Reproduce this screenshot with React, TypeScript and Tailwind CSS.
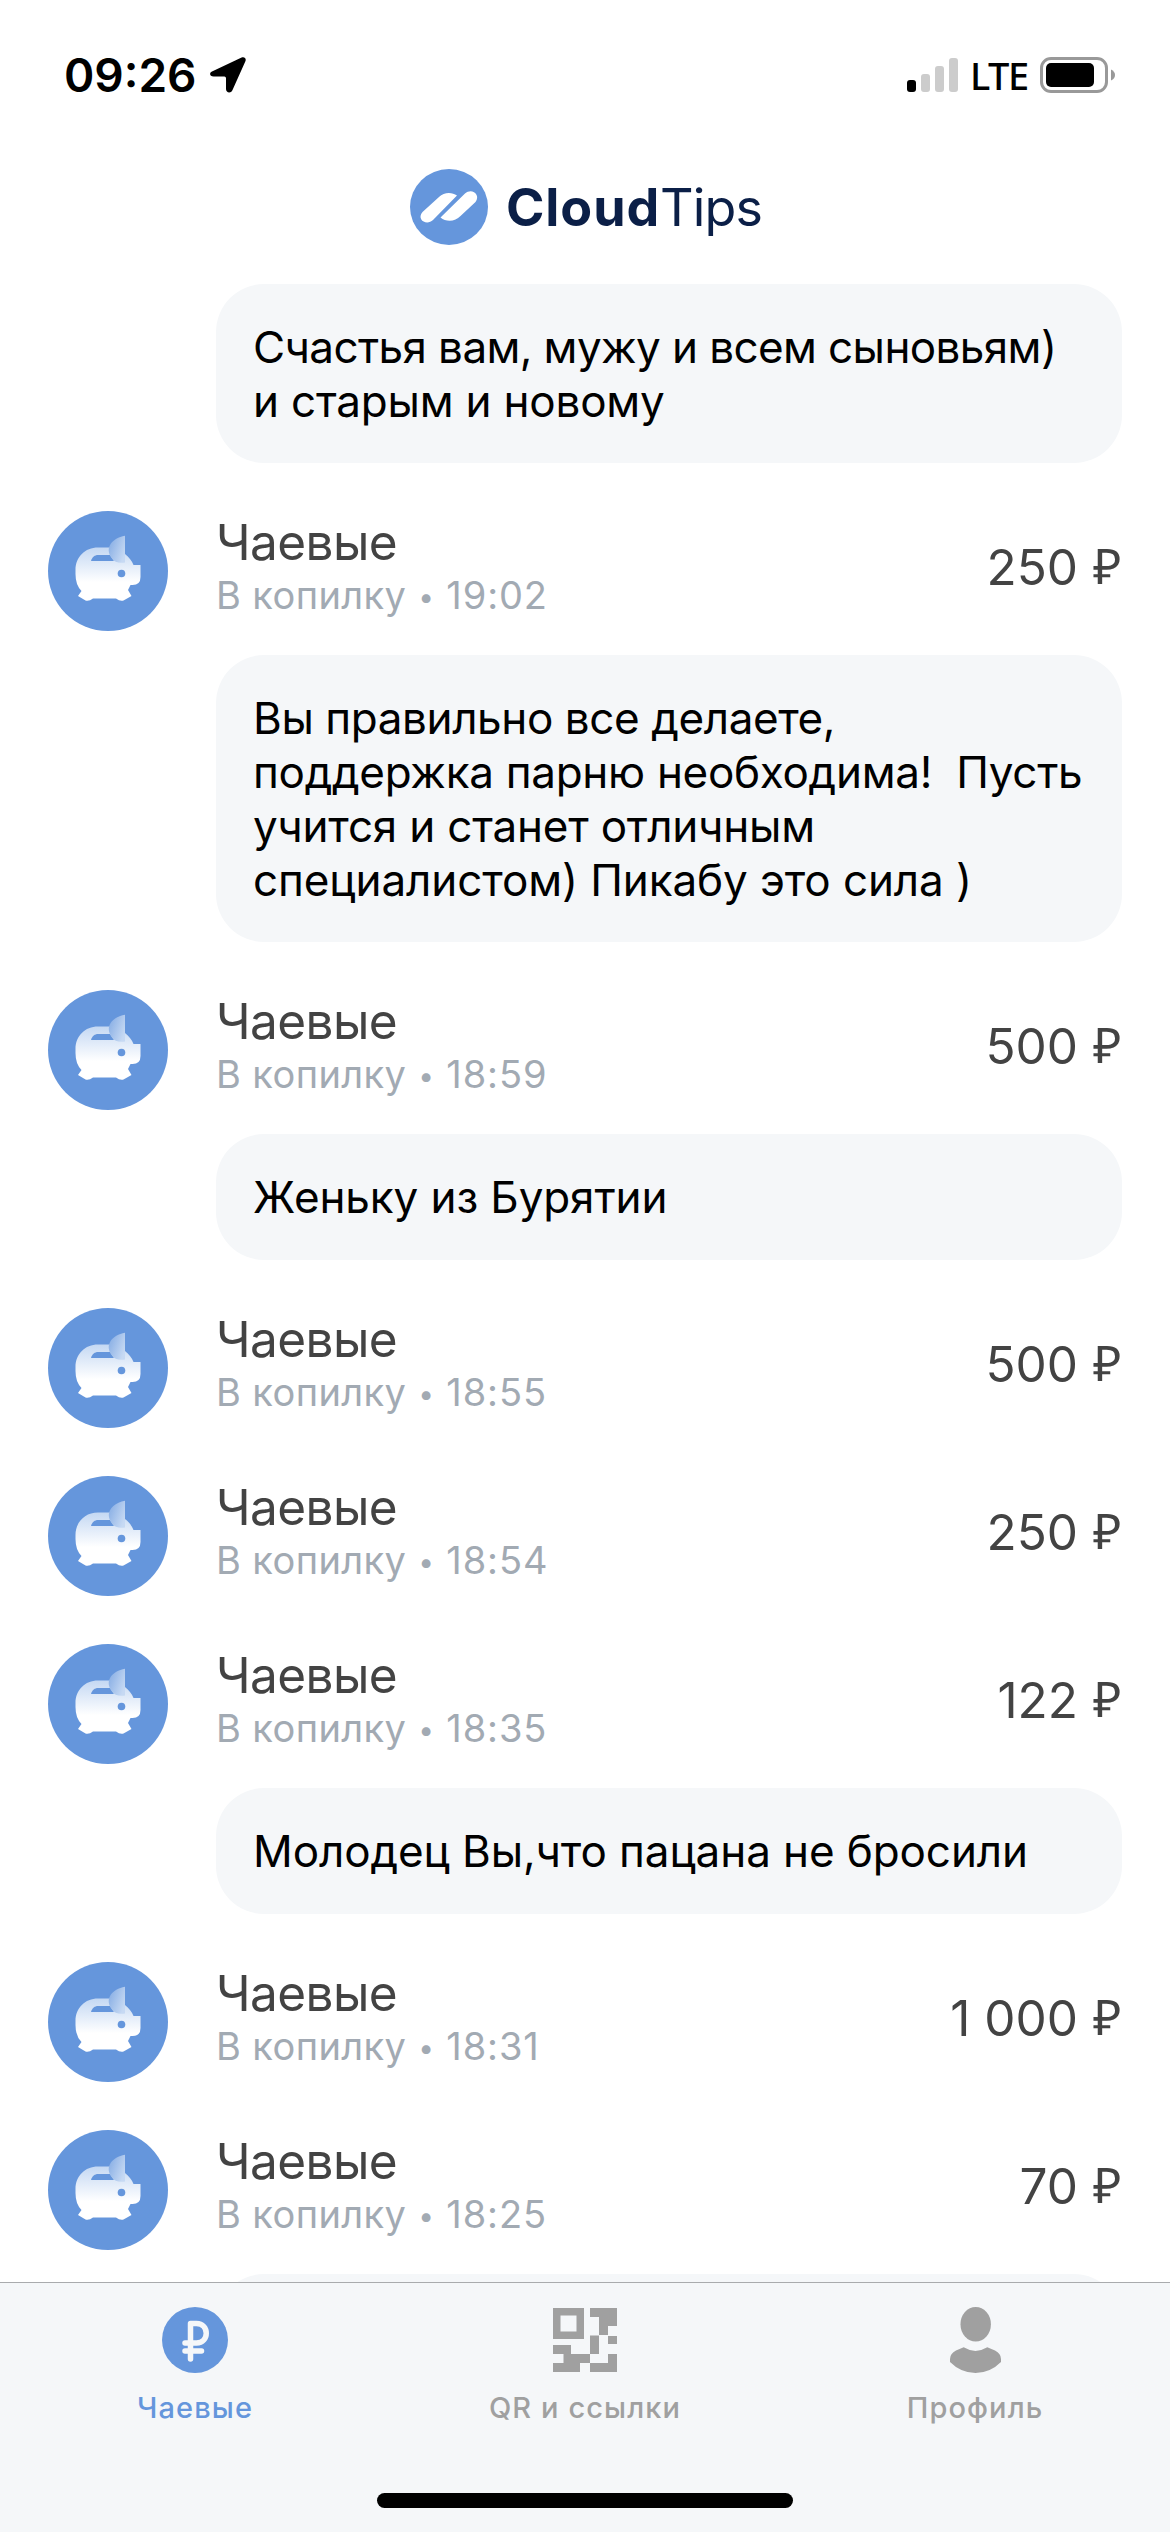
import { Fragment } from 'react';

interface MessageLine {
  text: string;
  tracking?: string;
}

interface Tip {
  id: number;
  time: string;
  amount: string;
  message?: MessageLine[];
}

const greeting: MessageLine[] = [
  { text: 'Счастья вам, мужу и всем сыновьям)', tracking: 'tracking-[-0.6px]' },
  { text: 'и старым и новому', tracking: 'tracking-[-0.2px]' },
];

const tips: Tip[] = [
  {
    id: 1,
    time: '19:02',
    amount: '250',
    message: [
      { text: 'Вы правильно все делаете,', tracking: 'tracking-[-0.4px]' },
      { text: 'поддержка парню необходима!  Пусть', tracking: 'tracking-[-0.3px]' },
      { text: 'учится и станет отличным', tracking: 'tracking-[-0.2px]' },
      { text: 'специалистом) Пикабу это сила )', tracking: 'tracking-[-0.1px]' },
    ],
  },
  {
    id: 2,
    time: '18:59',
    amount: '500',
    message: [{ text: 'Женьку из Бурятии', tracking: 'tracking-[-0.1px]' }],
  },
  { id: 3, time: '18:55', amount: '500' },
  { id: 4, time: '18:54', amount: '250' },
  { id: 5, time: '18:35', amount: '122', message: [{ text: 'Молодец Вы,что пацана не бросили', tracking: 'tracking-[-0.1px]' }] },
  { id: 6, time: '18:31', amount: '1 000' },
  { id: 7, time: '18:25', amount: '70', message: [{ text: ' ' }] },
];

function StatusBar() {
  return (
    <div className="flex h-[148px] shrink-0 items-start justify-between pl-[64px] pr-[55px] pt-[45px]">
      <div className="flex h-[60px] items-center">
        <span className="text-[46px] font-semibold leading-[60px] text-black">09:26</span>
        <svg className="ml-[13px]" width="36" height="36" viewBox="0 0 36 36">
          <path
            d="M2 14.6 31.6 0.6C34.3-.6 36.6 1.6 35.4 4.3L22.4 33.2C20.8 36.7 16 35.8 16 32V21.2Q16 19.6 14.4 19.6H3.6C-.4 19.6-1 16 2 14.6Z"
            fill="#000"
          />
        </svg>
      </div>
      <div className="flex h-[60px] items-center">
        <svg width="51" height="34" viewBox="0 0 51 34">
          <rect x="0" y="22" width="9" height="12" rx="3" fill="#000" />
          <rect x="14" y="16" width="9" height="18" rx="3" fill="#ccc" />
          <rect x="28" y="8" width="9" height="26" rx="3" fill="#ccc" />
          <rect x="42" y="0" width="9" height="34" rx="3" fill="#ccc" />
        </svg>
        <span className="ml-[12px] w-[57px] font-['Noto_Sans',sans-serif] text-[38px] font-medium leading-[60px] tracking-[-1.5px] text-black">
          LTE
        </span>
        <svg className="ml-[13px]" width="75" height="36" viewBox="0 0 75 36">
          <rect x="1.5" y="1.5" width="65" height="33" rx="9.5" fill="none" stroke="#999" strokeWidth="3" />
          <rect x="6" y="6" width="48" height="24" rx="5" fill="#000" />
          <path d="M71 12.5Q75 14.5 75 18T71 23.5Z" fill="#999" />
        </svg>
      </div>
    </div>
  );
}

function Header() {
  return (
    <div className="flex h-[136px] shrink-0 items-start pl-[410px] pt-[20px]">
      <svg className="mt-px" width="78" height="76" viewBox="0 0 78 76">
        <ellipse cx="39" cy="38" rx="39" ry="38" fill="#6596dc" />
        <path
          d="M12.5 43 29 28C34 23 42 23 47 26.5L23 51C17 57 6 51 12.5 43ZM30.5 48.5 55 24.5C62 18.5 71 26 65.5 33L50.5 47C45 53 36 53 30.5 48.5Z"
          fill="#fff"
        />
      </svg>
      <div className="ml-[18px] flex whitespace-nowrap pt-px leading-[78px] text-[#0b1f47]">
        <span className="text-[52px] font-bold tracking-[0.9px]">Cloud</span>
        <span className="text-[52px] tracking-[-0.9px]">Tips</span>
      </div>
    </div>
  );
}

function PiggyAvatar() {
  return (
    <svg className="shrink-0" width="120" height="120" viewBox="0 0 120 120">
      <defs>
        <linearGradient id="pigBody" x1="0" y1="0" x2="0" y2="1">
          <stop offset="0" stopColor="#c4d8f3" />
          <stop offset="0.65" stopColor="#fff" />
        </linearGradient>
        <linearGradient id="pigEar" x1="0.1" y1="0.3" x2="0.9" y2="0.8">
          <stop offset="0" stopColor="#8fb3e6" />
          <stop offset="1" stopColor="#c6d9f3" />
        </linearGradient>
      </defs>
      <circle cx="60" cy="60" r="60" fill="#6596dc" />
      <path
        d="M50 36.5H66L77 43C81 46 84 50 85.5 54H92.5V66Q92.5 74 84.5 74H82.5L80 79L83.5 85L75.5 89.5Q72 90.5 68 87.5H45Q41 90.5 37.5 89.5L30 85L33.5 80Q27.5 74 27.5 63V59C27.5 46 37 36.5 50 36.5Z"
        fill="url(#pigBody)"
      />
      <path d="M43 50C44 46 47 44 50 44H62L66 50Z" fill="#6596dc" />
      <path d="M77 24.7V51.5Q68 53 64 47.5C56 37 64 27 77 24.7Z" fill="url(#pigEar)" />
      <circle cx="73.5" cy="62.5" r="3.8" fill="#6596dc" />
    </svg>
  );
}

function MessageBubble({ lines }: { lines: MessageLine[] }) {
  return (
    <div className="mb-6 ml-[216px] mr-[48px] whitespace-pre rounded-[48px] bg-[#f5f7f9] px-[37px] pb-[35px] pt-[37px] text-[44px] leading-[53.7px] text-black">
      {lines.map((line, index) => (
        <div key={index} className={line.tracking}>
          {line.text}
        </div>
      ))}
    </div>
  );
}

function TipRow({ tip }: { tip: Tip }) {
  return (
    <div className="flex h-[168px] items-center px-[48px]">
      <PiggyAvatar />
      <div className="mb-[10px] ml-[48px] flex-1">
        <div className="text-[49.5px] leading-[60px] tracking-[-0.6px] text-[#434343]">Чаевые</div>
        <div className="flex whitespace-pre text-[38px] leading-[46px] tracking-[0.4px] text-[#a2aab3]">
          <span>В копилку</span>
          <span className="w-[40px] pt-[2px] text-center text-[28px]">•</span>
          <span className="tracking-[0.9px]">{tip.time}</span>
        </div>
      </div>
      <div className="mt-[-8px] flex whitespace-pre text-[49.5px] leading-[60px] text-[#434343]">
        <span>{tip.amount}</span>
        <span className="ml-[15px] font-['Liberation_Sans',sans-serif] text-[49px]">₽</span>
      </div>
    </div>
  );
}

function TabBar() {
  return (
    <div className="relative flex h-[250px] shrink-0 border-t border-[#a9abad] bg-[#f5f7f9] pt-[24px]">
      <div className="flex flex-1 flex-col items-center text-[#6596dc]">
        <svg width="66" height="66" viewBox="0 0 66 66">
          <circle cx="33" cy="33" r="33" fill="#6596dc" />
          <path
            d="M28.5 52V16.5H34.5C47.5 16.5 47.5 36 34.5 36H23M23 44H39.5"
            fill="none"
            stroke="#f5f7f9"
            strokeWidth="5.5"
            strokeLinecap="round"
            strokeLinejoin="round"
          />
        </svg>
        <span className="mt-[17px] text-[29px] font-medium leading-[36px] tracking-[1.1px]">Чаевые</span>
      </div>
      <div className="flex flex-1 flex-col items-center text-[#a0a0a0]">
        <svg width="66" height="66" viewBox="-1 -1 66 66" fill="currentColor">
          <path fillRule="evenodd" d="M0 0H31V31H0ZM7.5 7.5V23.5H23.5V7.5Z" />
          <path d="M37 0H64V18H55V27H46V9H37ZM37 27.5H46V46H37ZM55 28H64V36H55ZM0 37H18V46H37V55H27V64H0V55H10.5V46H0ZM55 46H64V64H37V55H55Z" />
        </svg>
        <span className="mt-[17px] text-[29px] font-medium leading-[36px] tracking-[1.1px]">QR и ссылки</span>
      </div>
      <div className="flex flex-1 flex-col items-center text-[#a0a0a0]">
        <svg width="51" height="66" viewBox="0 0 51 66" fill="currentColor">
          <ellipse cx="25.7" cy="17.3" rx="15.2" ry="17.3" />
          <path d="M13.7 40.3Q25.5 47.5 37.3 40.3L45 43.5Q51 46.5 51 52V55Q40 66 25.5 66T0 55V52Q0 46.5 6 43.5Z" />
        </svg>
        <span className="mt-[17px] text-[29px] font-medium leading-[36px] tracking-[1.1px]">Профиль</span>
      </div>
      <div className="absolute bottom-[24px] left-[377px] h-[15px] w-[416px] rounded-full bg-black" />
    </div>
  );
}

export default function App() {
  return (
    <div className="flex h-[2532px] w-[1170px] flex-col overflow-hidden bg-white font-['Inter','Noto_Sans',sans-serif]">
      <StatusBar />
      <Header />
      <div className="min-h-0 flex-1 overflow-hidden">
        <MessageBubble lines={greeting} />
        {tips.map((tip) => (
          <Fragment key={tip.id}>
            <TipRow tip={tip} />
            {tip.message && <MessageBubble lines={tip.message} />}
          </Fragment>
        ))}
      </div>
      <TabBar />
    </div>
  );
}
